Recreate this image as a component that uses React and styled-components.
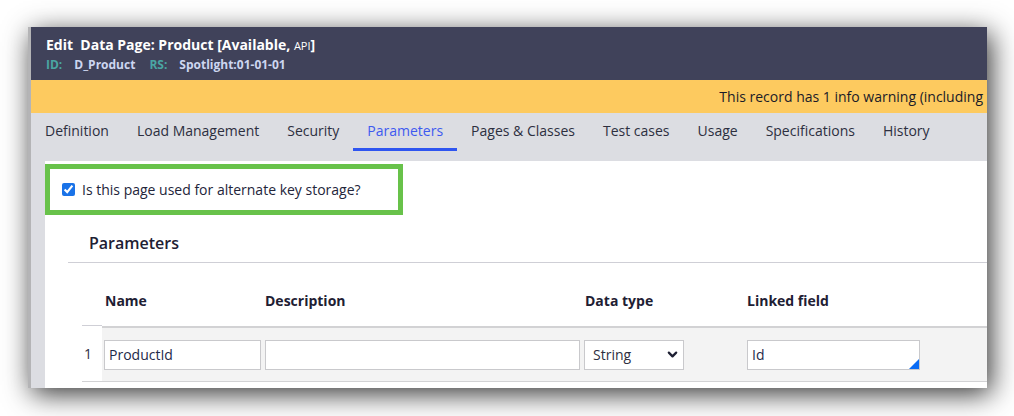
import React from "react";
import styled, { createGlobalStyle } from "styled-components";

const GlobalStyle = createGlobalStyle`
    html, body {
        margin: 0;
        background: #ffffff;
        font-family: "Open Sans", "Liberation Sans", sans-serif;
    }
`;

const Page = styled.div`
    padding: 27px 0 0 28px;
    height: 416px;
    box-sizing: border-box;
    overflow: hidden;
`;

const Window = styled.div`
    display: flex;
    flex-direction: column;
    width: 959px;
    height: 361px;
    box-sizing: border-box;
    border-left: 3px solid #b4b4b6;
    background: #dcdde2;
    box-shadow: 4px 6px 26px rgba(0, 0, 0, 0.8);
    overflow: hidden;
`;

const Header = styled.div`
    display: flex;
    flex-direction: column;
    justify-content: center;
    height: 53px;
    padding: 0 15px;
    background: #40425a;
    color: #ffffff;
`;

const Title = styled.div`
    font-size: 14px;
    font-weight: 700;
    line-height: 20px;
    white-space: pre;
`;

const Sub = styled.span`
    font-size: 11px;
    font-weight: 400;
`;

const Meta = styled.div`
    display: flex;
    gap: 14px;
    font-size: 12px;
    font-weight: 700;
    line-height: 17px;
`;

const MetaItem = styled.span`
    display: flex;
    gap: 12px;
`;

const MetaKey = styled.span`
    color: #4aa6a3;
`;

const MetaValue = styled.span`
    color: #cdd6f0;
`;

const Banner = styled.div`
    display: flex;
    align-items: center;
    justify-content: flex-end;
    height: 33px;
    padding-right: 4px;
    background: #fdca5f;
    color: #1a1b28;
    font-size: 14px;
    white-space: nowrap;
    overflow: hidden;
`;

const Tabs = styled.ul`
    display: flex;
    height: 48px;
    margin: 0;
    padding: 0;
    list-style: none;
`;

const Tab = styled.li`
    display: flex;
    align-items: center;
    height: 35px;
    padding: 0 14px;
    font-size: 14px;
    color: ${(props) => (props.active ? "#3e5af0" : "#2d2f3f")};
    border-bottom: 3px solid ${(props) => (props.active ? "#2f55f0" : "transparent")};
`;

const Panel = styled.div`
    flex: 1;
    margin-left: 14px;
    background: #ffffff;
    padding-top: 3px;
`;

const Highlight = styled.label`
    display: flex;
    align-items: center;
    gap: 7px;
    width: 358px;
    height: 51px;
    box-sizing: border-box;
    padding-left: 12px;
    border: 5px solid #68c24a;
    font-size: 14px;
    color: #23253a;
`;

const Check = styled.input`
    width: 13px;
    height: 13px;
    margin: 0;
    accent-color: #1a73e8;
`;

const Section = styled.div`
    margin-left: 23px;
`;

const SectionTitle = styled.h2`
    margin: 0;
    height: 48px;
    box-sizing: border-box;
    display: flex;
    align-items: center;
    padding: 9px 0 0 21px;
    border-bottom: 1px solid #cfcfd6;
    font-size: 16px;
    font-weight: 600;
    color: #1e2033;
`;

const Grid = styled.div`
    display: grid;
    grid-template-columns: 20px 161px 319px 163px 1fr;
    margin-left: 14px;
`;

const HeadCell = styled.div`
    display: flex;
    align-items: center;
    height: 63px;
    box-sizing: border-box;
    padding: 12px 0 0 ${(props) => props.pad || 0}px;
    font-size: 14px;
    font-weight: 700;
    color: #1e2033;
    border-bottom: ${(props) => (props.num ? "1px solid #cfcfd6" : "none")};
`;

const Cell = styled.div`
    display: flex;
    align-items: center;
    height: 56px;
    box-sizing: border-box;
    padding-left: 2px;
    background: ${(props) => (props.num ? "#ffffff" : "#f3f3f3")};
    border-top: ${(props) => (props.num ? "0" : "2px solid #d2d2d4")};
    border-bottom: 1px solid #d2d2d4;
    font-size: 14px;
    color: #2d2f3f;
`;

const Input = styled.div`
    position: relative;
    display: flex;
    align-items: center;
    width: ${(props) => props.w}px;
    height: 30px;
    box-sizing: border-box;
    padding: 0 4px;
    border: 1px solid #c9c9cc;
    background: #ffffff;
    font-size: 14px;
    color: #1e2a4a;
`;

const Corner = styled.span`
    position: absolute;
    right: 0;
    bottom: 0;
    width: 0;
    height: 0;
    border-left: 10px solid transparent;
    border-bottom: 10px solid #0a6cf5;
`;

const Select = styled(Input)`
    justify-content: space-between;
    padding: 0 5px 0 8px;
    color: #2d2f3f;
`;

const columns = [
    { label: "Name", pad: 3 },
    { label: "Description", pad: 2 },
    { label: "Data type", pad: 3 },
    { label: "Linked field", pad: 2 },
];

const tabs = [
    "Definition",
    "Load Management",
    "Security",
    "Parameters",
    "Pages & Classes",
    "Test cases",
    "Usage",
    "Specifications",
    "History",
];

export default function App() {
    return (
        <Page>
            <GlobalStyle />
            <Window>
                <Header>
                    <Title>
                        Edit  Data Page: Product [Available, <Sub>API</Sub>]
                    </Title>
                    <Meta>
                        <MetaItem>
                            <MetaKey>ID:</MetaKey>
                            <MetaValue>D_Product</MetaValue>
                        </MetaItem>
                        <MetaItem>
                            <MetaKey>RS:</MetaKey>
                            <MetaValue>Spotlight:01-01-01</MetaValue>
                        </MetaItem>
                    </Meta>
                </Header>
                <Banner>This record has 1 info warning (including</Banner>
                <Tabs>
                    {tabs.map((name) => (
                        <Tab key={name} active={name === "Parameters"}>
                            {name}
                        </Tab>
                    ))}
                </Tabs>
                <Panel>
                    <Highlight>
                        <Check type="checkbox" defaultChecked />
                        Is this page used for alternate key storage?
                    </Highlight>
                    <Section>
                        <SectionTitle>Parameters</SectionTitle>
                        <Grid>
                            <HeadCell num />
                            {columns.map((col) => (
                                <HeadCell key={col.label} pad={col.pad}>
                                    {col.label}
                                </HeadCell>
                            ))}
                            <Cell num>1</Cell>
                            <Cell>
                                <Input w={157}>ProductId</Input>
                            </Cell>
                            <Cell>
                                <Input w={315} />
                            </Cell>
                            <Cell>
                                <Select w={100}>
                                    String
                                    <svg width="11" height="11" viewBox="0 0 24 24" fill="none" stroke="#1e2033" strokeWidth="5" strokeLinecap="round" strokeLinejoin="round">
                                        <path d="M4 8l8 8 8-8" />
                                    </svg>
                                </Select>
                            </Cell>
                            <Cell>
                                <Input w={173}>
                                    Id
                                    <Corner />
                                </Input>
                            </Cell>
                        </Grid>
                    </Section>
                </Panel>
            </Window>
        </Page>
    );
}
